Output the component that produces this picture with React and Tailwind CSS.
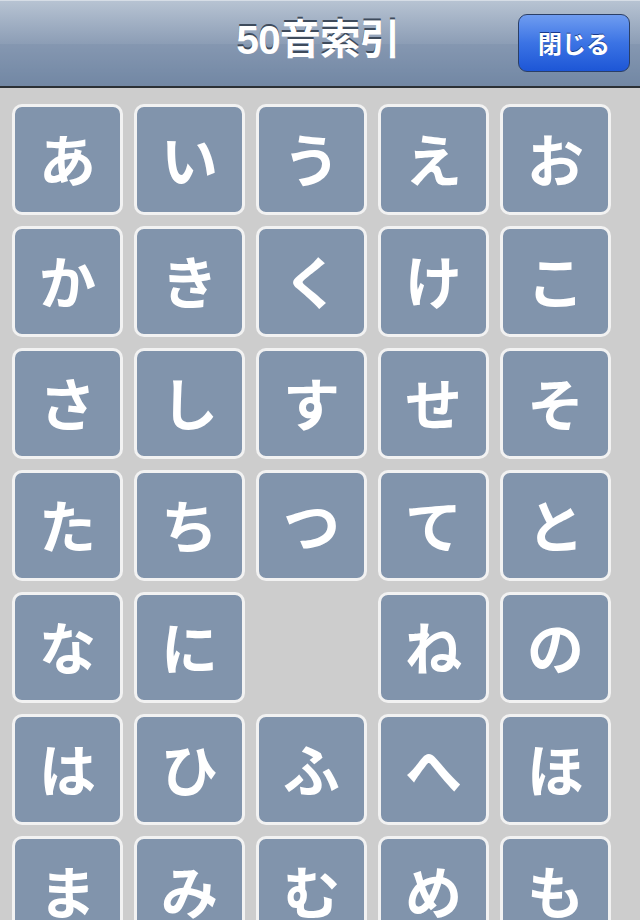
import React from 'react';

const rows = [
    ['あ', 'い', 'う', 'え', 'お'],
    ['か', 'き', 'く', 'け', 'こ'],
    ['さ', 'し', 'す', 'せ', 'そ'],
    ['た', 'ち', 'つ', 'て', 'と'],
    ['な', 'に', '', 'ね', 'の'],
    ['は', 'ひ', 'ふ', 'へ', 'ほ'],
    ['ま', 'み', 'む', 'め', 'も'],
];

const KanaTile = ({ kana }) => {
    if (!kana) {
        return <div className="h-[111px] w-[111px]" />;
    }
    return (
        <button
            type="button"
            className="flex h-[111px] w-[111px] items-center justify-center rounded-[10px] border-[3px] border-[#f2f2f2] bg-[#8194ac] pb-1 text-[57px] font-bold leading-none text-white"
        >
            {kana}
        </button>
    );
};

const App = () => {
    return (
        <div
            className="h-[920px] w-[640px] overflow-hidden bg-[#cdcdcd]"
            style={{ fontFamily: '"Noto Sans CJK JP", "Noto Sans", sans-serif' }}
        >
            <header className="relative flex h-[88px] items-center justify-center border-b-2 border-[#2b3035] bg-gradient-to-b from-[#b8c4d3] via-[#8d9eb6] to-[#6d83a1]">
                <div className="pointer-events-none absolute inset-x-0 top-0 h-px bg-[#d6dde6]" />
                <div className="pointer-events-none absolute inset-x-0 top-[44px] bottom-0 bg-[#7a8ea9]/40" />
                <h1
                    className="relative -ml-1 pb-1 text-[41px] font-bold tracking-tight text-white"
                    style={{ fontFamily: '"Liberation Sans", "Noto Sans CJK JP", sans-serif', textShadow: '0 -2px 0 #3e4b5c' }}
                >
                    50音索引
                </h1>
                <button
                    type="button"
                    className="absolute right-[10px] top-[14px] flex h-[58px] w-[112px] items-center justify-center overflow-hidden rounded-[9px] border border-[#2b3f66] bg-gradient-to-b from-[#6f9cf0] via-[#3b73e4] to-[#1d56d6] text-[24px] font-bold text-white"
                    style={{ textShadow: '0 -1px 0 #1a3a8a' }}
                >
                    閉じる
                </button>
            </header>

            <main className="flex flex-col gap-[11px] pl-[12px] pt-[16px]">
                {rows.map((row, rowIndex) => (
                    <div key={rowIndex} className="flex gap-[11px]">
                        {row.map((kana, colIndex) => (
                            <KanaTile key={colIndex} kana={kana} />
                        ))}
                    </div>
                ))}
            </main>
        </div>
    );
};

export default App;
